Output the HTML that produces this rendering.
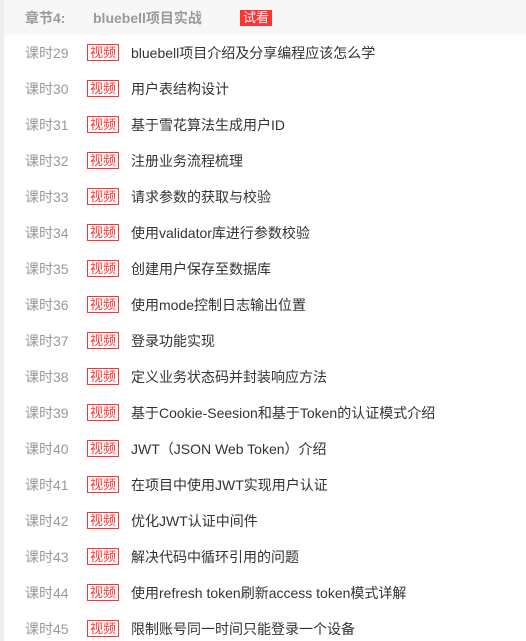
<!DOCTYPE html>
<html><head><meta charset="utf-8"><style>
body{margin:0;width:526px;height:641px;overflow:hidden;background:#fff;font-family:"Liberation Sans","Noto Sans CJK SC",sans-serif;position:relative}
.lb{position:absolute;left:0;top:0;width:4px;height:641px;background:#eee}
.hd{position:absolute;left:4px;top:0;width:522px;height:35px;background:#f7f7f7}
.hd span{position:absolute;top:9px;font-size:14px;font-weight:bold;color:#999;line-height:18px}
.try{position:absolute;left:240px;top:10px;background:#f33;color:#fff;font-size:13px;line-height:16px;padding:0 3px}
.r{position:absolute;left:0;height:20px;width:526px;font-size:14px;line-height:20px}
.n{position:absolute;left:25px;color:#999}
.t{position:absolute;left:87px;top:1px;border:1px solid #f33;color:#f33;font-size:13px;line-height:15px;padding:0 2px}
.x{position:absolute;left:131px;color:#333}
</style></head><body>
<div class="lb"></div>
<div class="hd"><span style="left:21px">章节4:</span><span style="left:89px">bluebell项目实战</span></div>
<div class="try">试看</div>
<div class="r" style="top:43px"><span class="n">课时29</span><span class="t">视频</span><span class="x">bluebell项目介绍及分享编程应该怎么学</span></div>
<div class="r" style="top:79px"><span class="n">课时30</span><span class="t">视频</span><span class="x">用户表结构设计</span></div>
<div class="r" style="top:115px"><span class="n">课时31</span><span class="t">视频</span><span class="x">基于雪花算法生成用户ID</span></div>
<div class="r" style="top:151px"><span class="n">课时32</span><span class="t">视频</span><span class="x">注册业务流程梳理</span></div>
<div class="r" style="top:187px"><span class="n">课时33</span><span class="t">视频</span><span class="x">请求参数的获取与校验</span></div>
<div class="r" style="top:223px"><span class="n">课时34</span><span class="t">视频</span><span class="x">使用validator库进行参数校验</span></div>
<div class="r" style="top:259px"><span class="n">课时35</span><span class="t">视频</span><span class="x">创建用户保存至数据库</span></div>
<div class="r" style="top:295px"><span class="n">课时36</span><span class="t">视频</span><span class="x">使用mode控制日志输出位置</span></div>
<div class="r" style="top:331px"><span class="n">课时37</span><span class="t">视频</span><span class="x">登录功能实现</span></div>
<div class="r" style="top:367px"><span class="n">课时38</span><span class="t">视频</span><span class="x">定义业务状态码并封装响应方法</span></div>
<div class="r" style="top:403px"><span class="n">课时39</span><span class="t">视频</span><span class="x">基于Cookie-Seesion和基于Token的认证模式介绍</span></div>
<div class="r" style="top:439px"><span class="n">课时40</span><span class="t">视频</span><span class="x">JWT（JSON Web Token）介绍</span></div>
<div class="r" style="top:475px"><span class="n">课时41</span><span class="t">视频</span><span class="x">在项目中使用JWT实现用户认证</span></div>
<div class="r" style="top:511px"><span class="n">课时42</span><span class="t">视频</span><span class="x">优化JWT认证中间件</span></div>
<div class="r" style="top:547px"><span class="n">课时43</span><span class="t">视频</span><span class="x">解决代码中循环引用的问题</span></div>
<div class="r" style="top:583px"><span class="n">课时44</span><span class="t">视频</span><span class="x">使用refresh token刷新access token模式详解</span></div>
<div class="r" style="top:619px"><span class="n">课时45</span><span class="t">视频</span><span class="x">限制账号同一时间只能登录一个设备</span></div>
</body></html>
